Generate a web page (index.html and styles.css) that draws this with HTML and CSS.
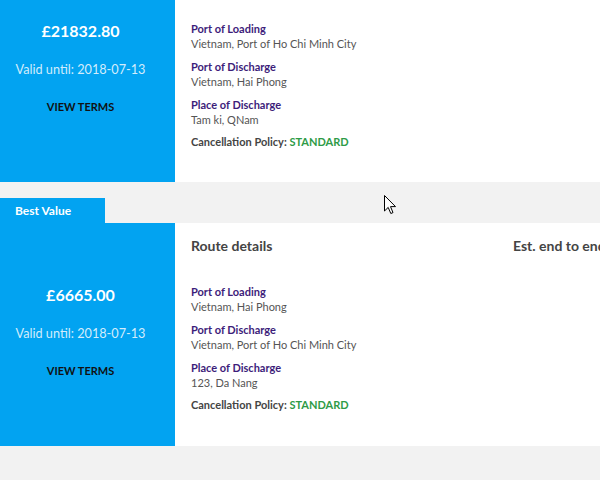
FILE: index.html
```html
<!DOCTYPE html>
<html>
<head>
<meta charset="utf-8">
<link rel="stylesheet" href="styles.css">
</head>
<body>
<div class="page">
  <div class="quote">
    <div class="card top">
      <div class="price-col">
        <div class="price">£21832.80</div>
        <div class="valid">Valid until: 2018-07-13</div>
        <div class="terms">VIEW TERMS</div>
      </div>
      <div class="details">
        <div class="group first">
          <div class="label">Port of Loading</div>
          <div class="value">Vietnam, Port of Ho Chi Minh City</div>
        </div>
        <div class="group">
          <div class="label">Port of Discharge</div>
          <div class="value">Vietnam, Hai Phong</div>
        </div>
        <div class="group">
          <div class="label">Place of Discharge</div>
          <div class="value">Tam ki, QNam</div>
        </div>
        <div class="policy">Cancellation Policy: <span class="std">STANDARD</span></div>
      </div>
    </div>
  </div>

  <div class="quote spaced">
    <div class="tab">Best Value</div>
    <div class="card">
      <div class="price-col">
        <div class="price">£6665.00</div>
        <div class="valid">Valid until: 2018-07-13</div>
        <div class="terms">VIEW TERMS</div>
      </div>
      <div class="details">
        <div class="head">
          <div class="route">Route details</div>
          <div class="est">Est. end to end</div>
        </div>
        <div class="group first">
          <div class="label">Port of Loading</div>
          <div class="value">Vietnam, Hai Phong</div>
        </div>
        <div class="group">
          <div class="label">Port of Discharge</div>
          <div class="value">Vietnam, Port of Ho Chi Minh City</div>
        </div>
        <div class="group">
          <div class="label">Place of Discharge</div>
          <div class="value">123, Da Nang</div>
        </div>
        <div class="policy">Cancellation Policy: <span class="std">STANDARD</span></div>
      </div>
    </div>
  </div>
</div>
<svg class="cursor" width="13" height="20" viewBox="0 0 13 20"><path d="M0.5 0.5 L0.5 16 L4.2 12.4 L6.8 18.5 L9 17.6 L6.5 11.6 L11.5 11.6 Z" fill="#fff" stroke="#000" stroke-width="1"/></svg>
</body>
</html>
```
FILE: styles.css
```css
html, body {
  margin: 0;
  padding: 0;
}
body {
  background: #f2f2f2;
  font-family: Lato, "Open Sans", sans-serif;
  width: 600px;
  height: 480px;
  overflow: hidden;
  position: relative;
}
.quote.spaced {
  margin-top: 16px;
}
.tab {
  width: 105px;
  height: 25px;
  line-height: 25px;
  background: #02a3f1;
  color: #fff;
  font-weight: 700;
  font-size: 12px;
  padding-left: 15px;
  box-sizing: border-box;
}
.card {
  display: flex;
  height: 223px;
  background: #fff;
}
.card.top {
  height: 182px;
}
.price-col {
  width: 175px;
  flex: none;
  background: #02a3f1;
  text-align: center;
  padding: 62px 14px 0 0;
  box-sizing: border-box;
}
.card.top .price-col {
  padding-top: 21px;
}
.price {
  font-size: 16px;
  font-weight: 700;
  color: #fff;
  line-height: 20px;
}
.valid {
  margin-top: 19px;
  font-size: 12.7px;
  line-height: 18px;
  color: #d3ecfc;
}
.terms {
  margin-top: 21px;
  font-size: 11px;
  font-weight: 700;
  line-height: 16px;
  color: #111;
}
.details {
  flex: 1;
  padding: 13px 0 0 16px;
  white-space: nowrap;
  overflow: hidden;
}
.card.top .details {
  padding-top: 21px;
}
.head {
  display: flex;
  font-size: 14px;
  font-weight: 700;
  color: #444;
  line-height: 20px;
}
.route {
  width: 322px;
  flex: none;
}
.group {
  margin-top: 8px;
}
.group.first {
  margin-top: 28px;
}
.card.top .group.first {
  margin-top: 0;
}
.label {
  font-size: 11px;
  font-weight: 700;
  line-height: 15px;
  color: #3d1d7a;
}
.value {
  font-size: 11px;
  line-height: 15px;
  color: #555;
}
.policy {
  margin-top: 7px;
  font-size: 11px;
  font-weight: 700;
  line-height: 15px;
  color: #444;
}
.std {
  color: #2e9b47;
}
.cursor {
  position: absolute;
  left: 384px;
  top: 195px;
}
```
